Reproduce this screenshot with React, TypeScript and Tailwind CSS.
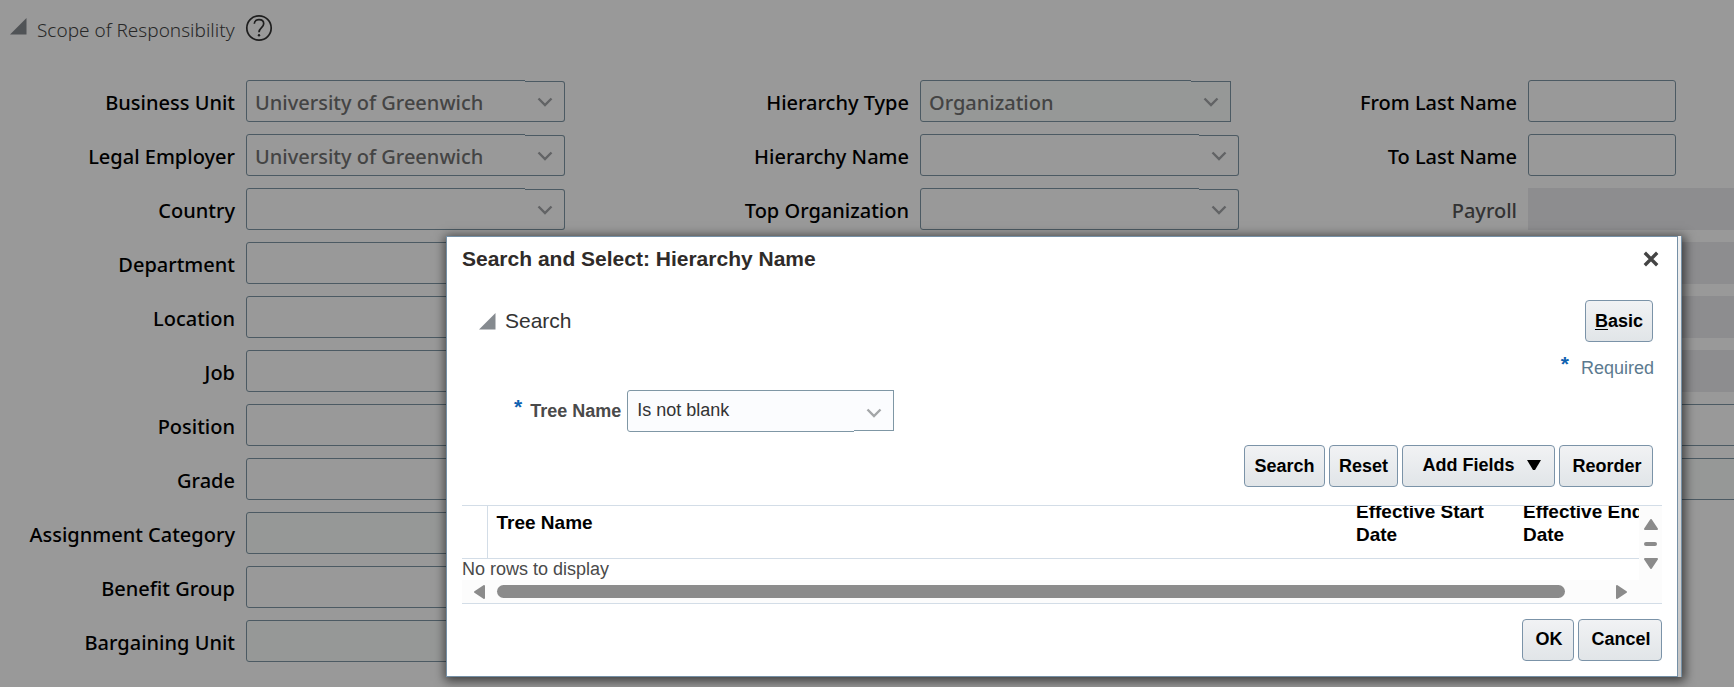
import React, { useState } from 'react';

interface Field {
  label: string;
  kind: 'select' | 'input' | 'disabled' | 'wide';
  value?: string;
  tinted?: boolean;
  short?: boolean;
}

const UNIT_FIELDS: Field[] = [
  { label: 'Business Unit', kind: 'select', value: 'University of Greenwich' },
  { label: 'Legal Employer', kind: 'select', value: 'University of Greenwich' },
  { label: 'Country', kind: 'select' },
  { label: 'Department', kind: 'select' },
  { label: 'Location', kind: 'select' },
  { label: 'Job', kind: 'select' },
  { label: 'Position', kind: 'select' },
  { label: 'Grade', kind: 'select' },
  { label: 'Assignment Category', kind: 'select', tinted: true },
  { label: 'Benefit Group', kind: 'select' },
  { label: 'Bargaining Unit', kind: 'select', tinted: true },
];

const HIERARCHY_FIELDS: Field[] = [
  { label: 'Hierarchy Type', kind: 'select', value: 'Organization', tinted: true, short: true },
  { label: 'Hierarchy Name', kind: 'select' },
  { label: 'Top Organization', kind: 'select' },
];

const NAME_FIELDS: Field[] = [
  { label: 'From Last Name', kind: 'input' },
  { label: 'To Last Name', kind: 'input' },
  { label: 'Payroll', kind: 'disabled' },
  { label: '', kind: 'disabled' },
  { label: '', kind: 'disabled' },
  { label: '', kind: 'disabled' },
  { label: '', kind: 'wide' },
  { label: '', kind: 'wide', tinted: true },
];

const Chevron = () => (
  <svg className="h-[10px] w-4" viewBox="0 0 16 10" fill="none" stroke="#a3a6a8" strokeWidth={2.4}>
    <path d="M1.5 1.5 8 8l6.5-6.5" />
  </svg>
);

const Disclosure = () => (
  <svg className="h-[17px] w-[17px]" viewBox="0 0 17 17" fill="#858a8f">
    <path d="M16.5 0v16.5H0z" />
  </svg>
);

const ScopeField: React.FC<{ field: Field; id: string }> = ({ field, id }) => {
  const bg = field.tinted ? 'bg-[#fafefc]' : 'bg-white';

  return (
    <div className="flex h-[42px] items-center">
      <label
        htmlFor={id}
        className={`flex-1 whitespace-nowrap pr-[11px] pt-1 text-right ${field.label === 'Payroll' ? 'text-[#555]' : 'text-black'}`}
      >
        {field.label}
      </label>
      {field.kind === 'select' && (
        <div className="w-80 shrink-0">
          <div className={`relative h-[42px] ${field.short ? 'w-[311px]' : 'w-[319px]'}`}>
            <select
              id={id}
              className={`h-full w-full appearance-none rounded-[3px] border border-[#7f97a5] pl-2 pr-10 pt-1 text-[#727272] ${bg}`}
            >
              <option>{field.value ?? ''}</option>
            </select>
            <span className="pointer-events-none absolute inset-y-0 right-0 flex w-10 flex-col bg-white pt-px">
              <span
                className={`flex flex-1 items-center border border-l-0 border-[#7f97a5] pl-3 ${bg} ${field.short ? '' : 'rounded-r-[3px]'}`}
              >
                <Chevron />
              </span>
            </span>
          </div>
        </div>
      )}
      {field.kind !== 'select' && (
        <div className="w-[206px] shrink-0">
          {field.kind === 'input' && (
            <input id={id} type="text" className="h-[42px] w-[148px] rounded-[3px] border border-[#7f97a5] px-2" />
          )}
          {field.kind === 'disabled' && (
            <input id={id} type="text" disabled aria-label={field.label || 'Payroll detail'} className="h-[42px] w-full bg-[#ebebef]" />
          )}
          {field.kind === 'wide' && (
            <input
              id={id}
              type="text"
              aria-label="Additional scope"
              className={`h-[42px] w-full rounded-l-[3px] border border-r-0 border-[#7f97a5] px-2 ${bg}`}
            />
          )}
        </div>
      )}
    </div>
  );
};

const FieldColumn: React.FC<{ fields: Field[]; name: string }> = ({ fields, name }) => (
  <div className="flex flex-col gap-3">
    {fields.map((field, i) => (
      <ScopeField key={i} field={field} id={`${name}-${i}`} />
    ))}
  </div>
);

interface DialogButtonProps {
  className: string;
  onClick?: () => void;
  children: React.ReactNode;
}

const DialogButton: React.FC<DialogButtonProps> = ({ className, onClick, children }) => (
  <button
    type="button"
    onClick={onClick}
    className={`flex h-[42px] items-center justify-center whitespace-nowrap rounded-[4px] border border-[#7b93a8] bg-linear-to-b from-[#f1f2f4] to-[#e1e5e8] text-[18px] font-bold text-black ${className}`}
  >
    {children}
  </button>
);

const HierarchyDialog: React.FC<{ onClose: () => void }> = ({ onClose }) => {
  const [operator, setOperator] = useState('Is not blank');

  return (
    <div className="absolute inset-0 flex items-start bg-black/40 pl-[446px] pr-[52px] pt-[236px] font-['Liberation_Sans',Arial,sans-serif]">
      <div
        role="dialog"
        aria-labelledby="dialog-title"
        className="flex flex-1 border-r border-[#7590a6] bg-linear-to-b from-[#f0f0f0] to-[#c4c4c4] pr-[3px] shadow-[1px_2px_10px_2px_rgba(0,0,0,0.6)]"
      >
        <div className="flex-1 border border-[#7590a6] bg-white px-[15px] pb-[15px] pt-2">
          <div className="flex h-7 items-center justify-between">
            <h2 id="dialog-title" className="text-[21px] font-bold text-[#2f2b29]">
              Search and Select: Hierarchy Name
            </h2>
            <button type="button" aria-label="Close" onClick={onClose} className="mr-[3px]">
              <svg className="h-4 w-4" viewBox="0 0 16 16" fill="none" stroke="#444" strokeWidth={3.4}>
                <path d="m1.8 1.8 12.4 12.4M14.2 1.8 1.8 14.2" />
              </svg>
            </button>
          </div>

          {/* Search criteria */}
          <div className="mt-[27px] flex items-center pl-[17px] pr-[9px]">
            <Disclosure />
            <h3 className="flex-1 pl-[9px] text-[21px] text-[#333]">Search</h3>
            <DialogButton className="w-[68px]">
              <span className="underline underline-offset-2">B</span>asic
            </DialogButton>
          </div>
          <div className="mt-[14px] flex h-6 items-center justify-end gap-3 pr-2 text-[18px] text-[#5c7a8f]">
            <span className="mb-2 text-[21px] font-bold text-[#0f62b0]">*</span>
            Required
          </div>
          <div className="mt-2.5 flex items-center pl-[52px]">
            <span className="mb-2 text-[21px] font-bold text-[#0f62b0]">*</span>
            <label htmlFor="tree-name" className="w-[105px] pl-2 text-[18px] font-bold text-[#4a4a4a]">
              Tree Name
            </label>
            <div className="relative h-[42px] w-[267px]">
              <select
                id="tree-name"
                value={operator}
                onChange={(e) => setOperator(e.target.value)}
                className="h-full w-full appearance-none rounded-l-[3px] border border-[#7f97a5] bg-[#fbfcfe] pb-0.5 pl-[9px] pr-10 text-[18px] text-[#333]"
              >
                <option>Is not blank</option>
                <option>Is blank</option>
                <option>Equals</option>
              </select>
              <span className="pointer-events-none absolute inset-y-0 right-0 flex w-10 flex-col bg-white pb-px">
                <span className="flex flex-1 items-center border border-l-0 border-[#7f97a5] bg-[#fbfcfe] pl-3 pt-1">
                  <Chevron />
                </span>
              </span>
            </div>
          </div>
          <div className="mt-[13px] flex justify-end gap-1 pr-[9px]">
            <DialogButton className="w-[81px]">Search</DialogButton>
            <DialogButton className="w-[69px]">Reset</DialogButton>
            <DialogButton className="w-[153px] gap-3 pb-0.5 pl-1.5">
              Add Fields
              <svg className="h-[11px] w-[14px]" viewBox="0 0 14 11" fill="#000">
                <path d="M0 0h14L8 10H6z" />
              </svg>
            </DialogButton>
            <DialogButton className="w-[94px] pl-0.5">Reorder</DialogButton>
          </div>

          {/* Results */}
          <div className="mt-[18px] flex border-y border-[#d3dde7]">
            <div className="min-w-0 flex-1">
              <div className="h-[74px] overflow-hidden">
                <table className="w-full table-fixed border-collapse text-left text-[19px] leading-[23px] text-black">
                  <thead>
                    <tr className="h-[52px] align-top">
                      <th className="w-[25px] border-b border-r border-[#d3dde7]" />
                      <th className="border-b border-[#d3dde7] pl-[9px] pt-[5px]">Tree Name</th>
                      <th className="w-[167px] border-b border-[#d3dde7] pl-2">
                        <div className="flex h-10 items-end overflow-hidden">Effective Start Date</div>
                      </th>
                      <th className="w-[124px] border-b border-[#d3dde7] pl-2">
                        <div className="flex h-10 items-end overflow-hidden">
                          <span className="w-[124px] shrink-0">Effective End Date</span>
                        </div>
                      </th>
                    </tr>
                  </thead>
                  <tbody>
                    <tr>
                      <td colSpan={4} className="text-[18px] leading-[21px] text-[#4a4a4a]">
                        No rows to display
                      </td>
                    </tr>
                  </tbody>
                </table>
              </div>
              <div className="flex h-[23px] items-center bg-[#fcfcfc] px-3">
                <svg className="h-[14px] w-[11px]" viewBox="0 0 11 14" fill="#8b8b8b" stroke="#8b8b8b" strokeWidth={2} strokeLinejoin="round">
                  <path d="M10 1v12L1 7z" />
                </svg>
                <div className="ml-3 mr-[51px] h-[13px] flex-1 rounded-full bg-[#8b8b8b]" />
                <svg className="h-[14px] w-[11px]" viewBox="0 0 11 14" fill="#8b8b8b" stroke="#8b8b8b" strokeWidth={2} strokeLinejoin="round">
                  <path d="M1 1v12l9-6z" />
                </svg>
              </div>
            </div>
            <div className="flex w-[23px] flex-col items-center gap-3 bg-[#fcfcfc] pt-[13px]">
              <svg className="h-[11px] w-[14px]" viewBox="0 0 14 11" fill="#8b8b8b" stroke="#8b8b8b" strokeWidth={2} strokeLinejoin="round">
                <path d="M1 10h12L7 1z" />
              </svg>
              <div className="h-1 w-[13px] rounded-full bg-[#8b8b8b]" />
              <svg className="h-[11px] w-[14px]" viewBox="0 0 14 11" fill="#8b8b8b" stroke="#8b8b8b" strokeWidth={2} strokeLinejoin="round">
                <path d="M1 1h12L7 10z" />
              </svg>
            </div>
          </div>

          <div className="mt-[15px] flex justify-end gap-1">
            <DialogButton className="w-[52px] pb-0.5 pl-0.5" onClick={onClose}>OK</DialogButton>
            <DialogButton className="w-[84px] pb-0.5 pl-0.5" onClick={onClose}>Cancel</DialogButton>
          </div>
        </div>
      </div>
    </div>
  );
};

const App: React.FC = () => {
  const [dialogOpen, setDialogOpen] = useState(true);

  return (
    <div className="relative min-h-screen overflow-hidden bg-white font-['Noto_Sans','Open_Sans',sans-serif] text-[20px] font-medium">
      <header className="flex h-14 items-center pl-2.5">
        <div className="mb-1">
          <Disclosure />
        </div>
        <h1 className="pl-2.5 pt-1 text-[19px] font-light text-[#444]">Scope of Responsibility</h1>
        <button type="button" aria-label="Help" className="ml-2.5">
          <svg className="h-7 w-7" viewBox="0 0 28 28" fill="none" stroke="#333" strokeWidth={1.7}>
            <circle cx="14" cy="14" r="12.2" />
            <path d="M9.3 9.8c.2-2.500 2-4.100 4.700-4.100s4.700 1.600 4.700 4.100c0 3.700-4.700 3.900-4.700 8.400" />
            <circle cx="14" cy="21.3" r="1.2" fill="#333" stroke="none" />
          </svg>
        </button>
      </header>

      <main className="grid grid-cols-[566fr_674fr_494fr] pt-6">
        <FieldColumn fields={UNIT_FIELDS} name="unit" />
        <FieldColumn fields={HIERARCHY_FIELDS} name="hierarchy" />
        <FieldColumn fields={NAME_FIELDS} name="name" />
      </main>

      {dialogOpen && <HierarchyDialog onClose={() => setDialogOpen(false)} />}
    </div>
  );
};

export default App;
